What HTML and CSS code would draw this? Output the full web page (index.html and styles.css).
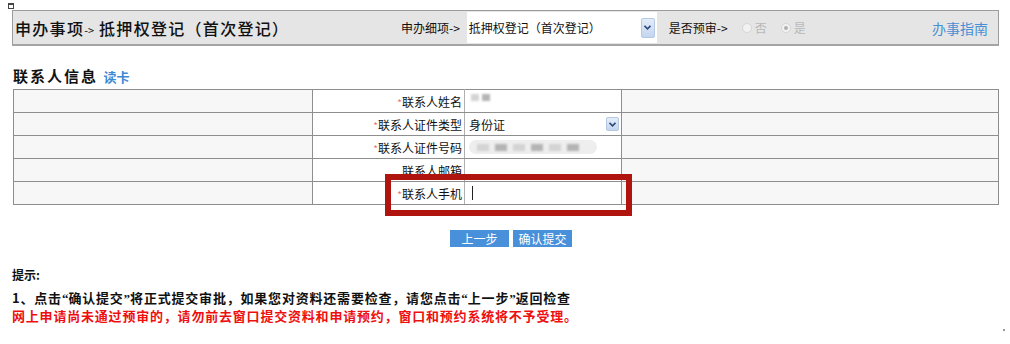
FILE: index.html
```html
<!DOCTYPE html>
<html lang="zh-CN">
<head>
<meta charset="utf-8">
<title>抵押权登记</title>
<link rel="stylesheet" href="styles.css">
</head>
<body>
<div class="page">
  <div class="topmark"><span class="markbox"></span></div>
  <div class="header">
    <div class="title">申办事项<span class="arrow">-&gt;</span> 抵押权登记（首次登记）</div>
    <div class="sublabel">申办细项-&gt;</div>
    <div class="select big">
      <span class="select-text">抵押权登记（首次登记）</span>
      <span class="select-btn"><svg width="7" height="5" viewBox="0 0 7 5"><path d="M0.5 0.8 L3.5 3.8 L6.5 0.8" fill="none" stroke="#2c4a7a" stroke-width="1.6"/></svg></span>
    </div>
    <div class="sublabel pre">是否预审-&gt;</div>
    <div class="radio"><span class="dot"></span>否</div>
    <div class="radio"><span class="dot on"></span>是</div>
    <a class="guide">办事指南</a>
  </div>

  <div class="section-title">联系人信息 <span class="readcard">读卡</span></div>

  <table class="form">
    <tr>
      <td class="c1"></td>
      <td class="c2"><span class="req">*</span>联系人姓名</td>
      <td class="c3"><span class="blur name"><i></i><i class="dk"></i></span></td>
      <td class="c4"></td>
    </tr>
    <tr>
      <td class="c1"></td>
      <td class="c2"><span class="req">*</span>联系人证件类型</td>
      <td class="c3">
        <div class="select small">
          <span class="select-text">身份证</span>
          <span class="select-btn"><svg width="7" height="5" viewBox="0 0 7 5"><path d="M0.5 0.8 L3.5 3.8 L6.5 0.8" fill="none" stroke="#2c4a7a" stroke-width="1.6"/></svg></span>
        </div>
      </td>
      <td class="c4"></td>
    </tr>
    <tr>
      <td class="c1"></td>
      <td class="c2"><span class="req">*</span>联系人证件号码</td>
      <td class="c3"><span class="blur idno"><i></i><i class="dk"></i><i></i><i class="dk"></i><i></i><i class="dk"></i></span></td>
      <td class="c4"></td>
    </tr>
    <tr>
      <td class="c1"></td>
      <td class="c2">联系人邮箱</td>
      <td class="c3"></td>
      <td class="c4"></td>
    </tr>
    <tr>
      <td class="c1"></td>
      <td class="c2"><span class="req">*</span>联系人手机</td>
      <td class="c3"><span class="caret"></span></td>
      <td class="c4"></td>
    </tr>
  </table>

  <div class="highlight"></div>

  <div class="buttons">
    <button class="btn">上一步</button>
    <button class="btn">确认提交</button>
  </div>

  <div class="tips">
    <div class="tips-title">提示:</div>
    <div class="tip-line">1、点击<span class="q">“</span>确认提交<span class="q">”</span>将正式提交审批，如果您对资料还需要检查，请您点击<span class="q">“</span>上一步<span class="q">”</span>返回检查</div>
    <div class="tip-line red">网上申请尚未通过预审的，请勿前去窗口提交资料和申请预约，窗口和预约系统将不予受理。</div>
  </div>
  <div class="cornermark"></div>
</div>
</body>
</html>
```

FILE: styles.css
```css
html, body {
  margin: 0;
  padding: 0;
  background: #ffffff;
}
body {
  font-family: "Noto Sans CJK SC", "Liberation Sans", sans-serif;
  font-size: 12px;
  color: #111;
}
.page {
  position: relative;
  width: 1010px;
  height: 344px;
  overflow: hidden;
}
.topmark {
  height: 10px;
  padding-left: 8px;
  padding-top: 3px;
  box-sizing: border-box;
}
.markbox {
  display: block;
  width: 4px;
  height: 3px;
  border: 1px solid #444;
  border-top-width: 2px;
}
.header {
  margin-left: 12px;
  width: 985px;
  height: 33px;
  background: #e5e5e5;
  border: 1px solid #9c9c9c;
  border-bottom: 2px solid #a5a5a5;
  display: flex;
  align-items: center;
}
.title {
  width: 386px;
  padding-left: 2px;
  font-size: 16px;
  font-weight: 500;
  letter-spacing: 1.3px;
  color: #111;
  white-space: nowrap;
}
.title .arrow {
  font-size: 11px;
  font-weight: 400;
  letter-spacing: 0;
}
.sublabel {
  font-size: 12px;
  color: #111;
  white-space: nowrap;
}
.sublabel.pre {
  margin-left: 12px;
  margin-right: 14px;
}
.select {
  background: #fff;
  display: flex;
  align-items: center;
  justify-content: space-between;
}
.select.big {
  width: 186px;
  height: 31px;
  margin-left: 7px;
  padding-left: 2px;
  padding-right: 2px;
}
.select-text {
  font-size: 12px;
  color: #111;
  white-space: nowrap;
}
.select-btn {
  width: 14px;
  height: 20px;
  background: linear-gradient(#e4edf9, #c3d5ef);
  border: 1px solid #b6c8e4;
  border-radius: 2px;
  display: flex;
  align-items: center;
  justify-content: center;
  box-sizing: border-box;
}
.radio {
  display: flex;
  align-items: center;
  color: #b8b8b8;
  font-size: 12px;
  margin-right: 14px;
}
.dot {
  width: 10px;
  height: 10px;
  border-radius: 50%;
  border: 1px solid #d6d6d6;
  background: #f2f2f2;
  box-sizing: border-box;
  margin-right: 3px;
  display: flex;
  align-items: center;
  justify-content: center;
}
.dot.on::after {
  content: "";
  width: 4px;
  height: 4px;
  border-radius: 50%;
  background: #b0b0b0;
}
.guide {
  margin-left: auto;
  margin-right: 10px;
  font-size: 14px;
  color: #4a8fd3;
}
.section-title {
  margin-top: 20px;
  margin-left: 13px;
  height: 23px;
  font-size: 15px;
  font-weight: 700;
  letter-spacing: 2px;
  color: #111;
  line-height: 20px;
}
.readcard {
  font-size: 13px;
  color: #3d8ad6;
  letter-spacing: 0;
}
.form {
  margin-left: 13px;
  width: 986px;
  border-collapse: collapse;
  border: 1px solid #8c8c8c;
  table-layout: fixed;
}
.form td {
  height: 22px;
  padding: 0;
  border-top: 1px solid #8e8e8e;
  border-bottom: 1px solid #8e8e8e;
  font-size: 12px;
  vertical-align: middle;
}
.form .c1 {
  width: 298px;
  background: #f7f7f7;
  border-right: 1px solid #8e8e8e;
}
.form .c2 {
  width: 149px;
  background: #fff;
  text-align: right;
  padding-right: 2px;
  border-right: 1px solid #b0b0b0;
  white-space: nowrap;
}
.form .c3 {
  width: 152px;
  background: #fff;
  padding-left: 4px;
  border-right: 1px solid #8e8e8e;
}
.form .c4 {
  background: #f7f7f7;
}
.req {
  color: #f07070;
  font-size: 10px;
}
.blur {
  display: flex;
  align-items: center;
  gap: 3px;
}
.blur i {
  display: block;
  height: 7px;
  width: 8px;
  background: #d4d4d4;
  filter: blur(0.8px);
}
.blur i.dk {
  background: #b4b4b4;
}
.blur.name {
  margin-left: 2px;
  margin-top: -7px;
}
.blur.idno {
  width: 128px;
  height: 14px;
  border-radius: 7px;
  background: #eeeeee;
  padding-left: 8px;
  box-sizing: border-box;
  gap: 6px;
}
.blur.idno i {
  width: 12px;
}
.select.small {
  width: 150px;
  height: 20px;
}
.select.small .select-btn {
  width: 13px;
  height: 14px;
}
.caret {
  display: block;
  width: 1px;
  height: 14px;
  background: #222;
  margin-left: 3px;
}
.highlight {
  position: absolute;
  left: 385px;
  top: 174px;
  width: 235px;
  height: 30px;
  border: 6px solid #b0140f;
}
.buttons {
  margin-top: 25px;
  display: flex;
  justify-content: center;
  gap: 4px;
  padding-left: 12px;
}
.btn {
  width: 59px;
  height: 17px;
  border: none;
  background: #4990da;
  color: #fff;
  font-family: "Noto Sans CJK SC", sans-serif;
  font-size: 12px;
  line-height: 17px;
  padding: 0;
}
.tips {
  margin-top: 20px;
  margin-left: 12px;
  font-weight: 700;
}
.tips-title {
  font-size: 12px;
  line-height: 16px;
  margin-bottom: 6px;
}
.tip-line {
  font-size: 13px;
  line-height: 17px;
  letter-spacing: 0.8px;
  white-space: nowrap;
}
.tip-line .q {
  font-family: "Liberation Serif", serif;
  letter-spacing: 0;
}
.tip-line.red {
  color: #ee1010;
}
.cornermark {
  position: absolute;
  left: 1003px;
  top: 329px;
  width: 2px;
  height: 2px;
  background: #999;
}
```
